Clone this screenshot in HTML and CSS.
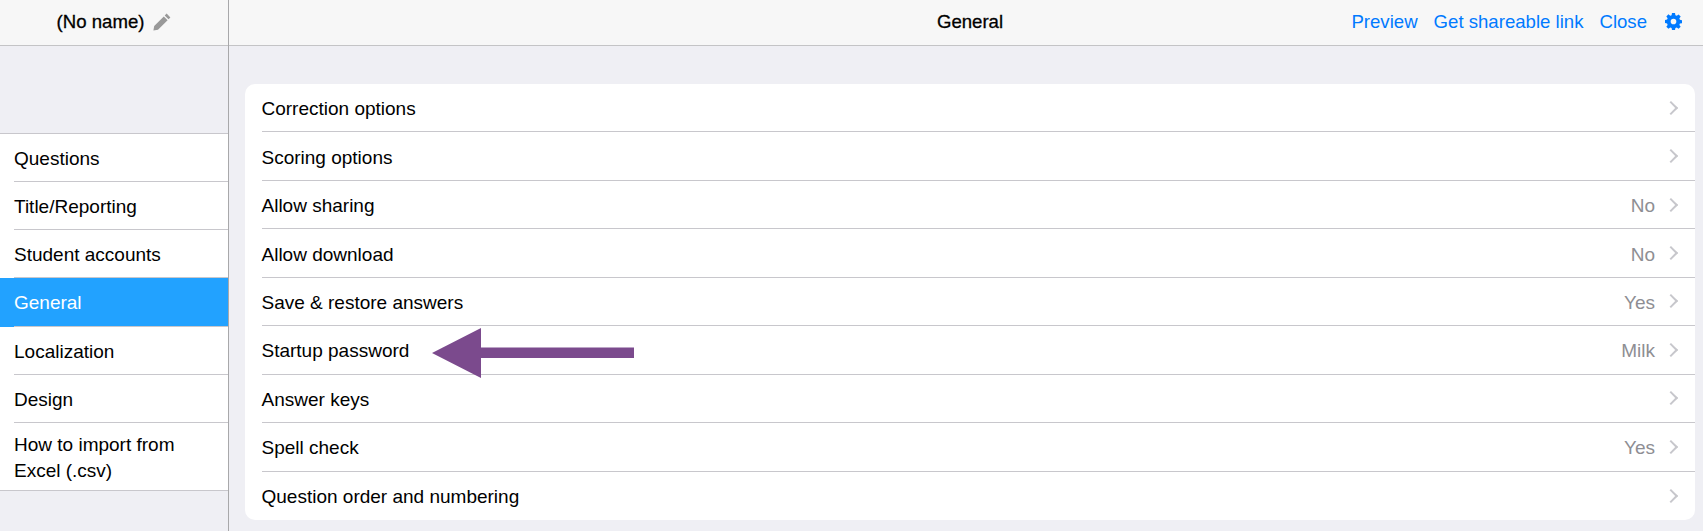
FILE: index.html
```html
<!DOCTYPE html>
<html>
<head>
  <meta charset="utf-8">
  <title>General</title>
  <link rel="stylesheet" href="styles.css">
</head>
<body>
  <div class="app">
    <aside class="sidebar">
      <div class="nav-bar sidebar-title">
        <span>(No name)</span>
        <svg class="pencil" width="18" height="18" viewBox="0 0 18 18"><path d="M13.6 0.6l3.8 3.8-1.9 1.9-3.8-3.8zM10.8 3.4l3.8 3.8-9.6 9.6-4.6 0.8 0.8-4.6z" fill="#999"/></svg>
      </div>
      <ul class="menu">
        <li><div class="menu-item">Questions</div></li>
        <li><div class="menu-item">Title/Reporting</div></li>
        <li><div class="menu-item">Student accounts</div></li>
        <li class="active"><div class="menu-item">General</div></li>
        <li><div class="menu-item">Localization</div></li>
        <li><div class="menu-item">Design</div></li>
        <li class="tall"><div class="menu-item">How to import from Excel (.csv)</div></li>
      </ul>
    </aside>

    <main class="content">
      <div class="nav-bar top-bar">
        <div class="top-title">General</div>
        <div class="top-links">
          <a>Preview</a>
          <a>Get shareable link</a>
          <a>Close</a>
          <svg class="gear" width="17" height="17" viewBox="0 0 18 18"><path fill="#007aff" fill-rule="evenodd" d="M7.4 0h3.2l.4 2.4 1.4.6 2-1.4 2.2 2.2-1.4 2 .6 1.4 2.2.4v3.2l-2.2.4-.6 1.4 1.4 2-2.2 2.2-2-1.4-1.4.6-.4 2H7.4L7 16l-1.4-.6-2 1.4-2.2-2.2 1.4-2-.6-1.4L0 10.6V7.4l2.2-.4.6-1.4-1.4-2 2.2-2.2 2 1.4L7 2.4zM9 6a3 3 0 1 0 0 6 3 3 0 0 0 0-6z"/></svg>
        </div>
      </div>

      <div class="card">
        <div class="row"><span class="label">Correction options</span><span class="chev"></span></div>
        <div class="row"><span class="label">Scoring options</span><span class="chev"></span></div>
        <div class="row"><span class="label">Allow sharing</span><span class="value">No</span><span class="chev"></span></div>
        <div class="row"><span class="label">Allow download</span><span class="value">No</span><span class="chev"></span></div>
        <div class="row"><span class="label">Save &amp; restore answers</span><span class="value">Yes</span><span class="chev"></span></div>
        <div class="row"><span class="label">Startup password</span><span class="value">Milk</span><span class="chev"></span></div>
        <div class="row"><span class="label">Answer keys</span><span class="chev"></span></div>
        <div class="row"><span class="label">Spell check</span><span class="value">Yes</span><span class="chev"></span></div>
        <div class="row"><span class="label">Question order and numbering</span><span class="chev"></span></div>
      </div>
    </main>
  </div>

  <!-- annotation drawn over the screenshot -->
  <svg class="arrow" width="206" height="52" viewBox="0 0 206 52"><path d="M0 26L49 1V20.500H202V31H49V51Z" fill="#7b4a8d"/></svg>
</body>
</html>
```

FILE: styles.css
```css
html, body {
  margin: 0;
  height: 100%;
  overflow: hidden;
}

body {
  font-family: "Liberation Sans", Arial, sans-serif;
  font-size: 19px;
  color: #000;
  background-color: #efeff4;
}

.app {
  display: flex;
  height: 531px;
}

.nav-bar {
  height: 43px;
  padding-bottom: 2px;
  background-color: #f7f7f7;
  border-bottom: 1px solid #c4c4c6;
  font-size: 18.6px;
}

.sidebar {
  width: 228px;
  flex: none;
  border-right: 1px solid #a8a8aa;
}

.sidebar-title {
  display: flex;
  align-items: center;
  justify-content: center;
  gap: 9px;
  -webkit-text-stroke: 0.3px #000;
}

.menu {
  list-style: none;
  margin: 87px 0 0;
  padding: 0;
  background-color: #fff;
  border-top: 1px solid #c8c7cc;
  border-bottom: 1px solid #c8c7cc;
}

.menu li {
  padding-left: 14px;
}

.menu-item {
  height: 45.15px;
  padding-top: 2px;
  line-height: 45px;
  border-bottom: 1px solid #c8c7cc;
}

.menu li.active {
  background-color: #22a2ff;
  color: #fff;
}

.menu li.tall .menu-item {
  height: 58px;
  padding: 9px 30px 0 0;
  line-height: 26px;
  border-bottom: none;
}

.content {
  flex: 1;
}

.top-bar {
  display: flex;
  align-items: center;
  justify-content: flex-end;
  position: relative;
  padding-right: 21px;
}

.top-title {
  position: absolute;
  left: 8px;
  right: 0;
  text-align: center;
  -webkit-text-stroke: 0.3px #000;
}

.top-links {
  display: flex;
  align-items: center;
  gap: 16px;
  color: #007aff;
  position: relative;
}

.gear {
  margin-left: 2px;
}

.card {
  margin: 38px 8px 0 16px;
  padding-left: 16.5px;
  background-color: #fff;
  border-radius: 10px;
}

.row {
  display: flex;
  align-items: center;
  height: 44.45px;
  padding: 3px 16px 0 0;
  border-bottom: 1px solid #c8c7cc;
}

.row:last-child {
  height: 45px;
  border-bottom: none;
}

.label {
  flex: 1;
}

.value {
  color: #8e8e93;
  margin-right: 11px;
}

.chev {
  width: 8px;
  height: 8px;
  margin: -3px 3px 0 0;
  border-top: 2.5px solid #c7c7cc;
  border-right: 2.5px solid #c7c7cc;
  transform: rotate(45deg);
}

.arrow {
  position: absolute;
  left: 432px;
  top: 327px;
}
```
